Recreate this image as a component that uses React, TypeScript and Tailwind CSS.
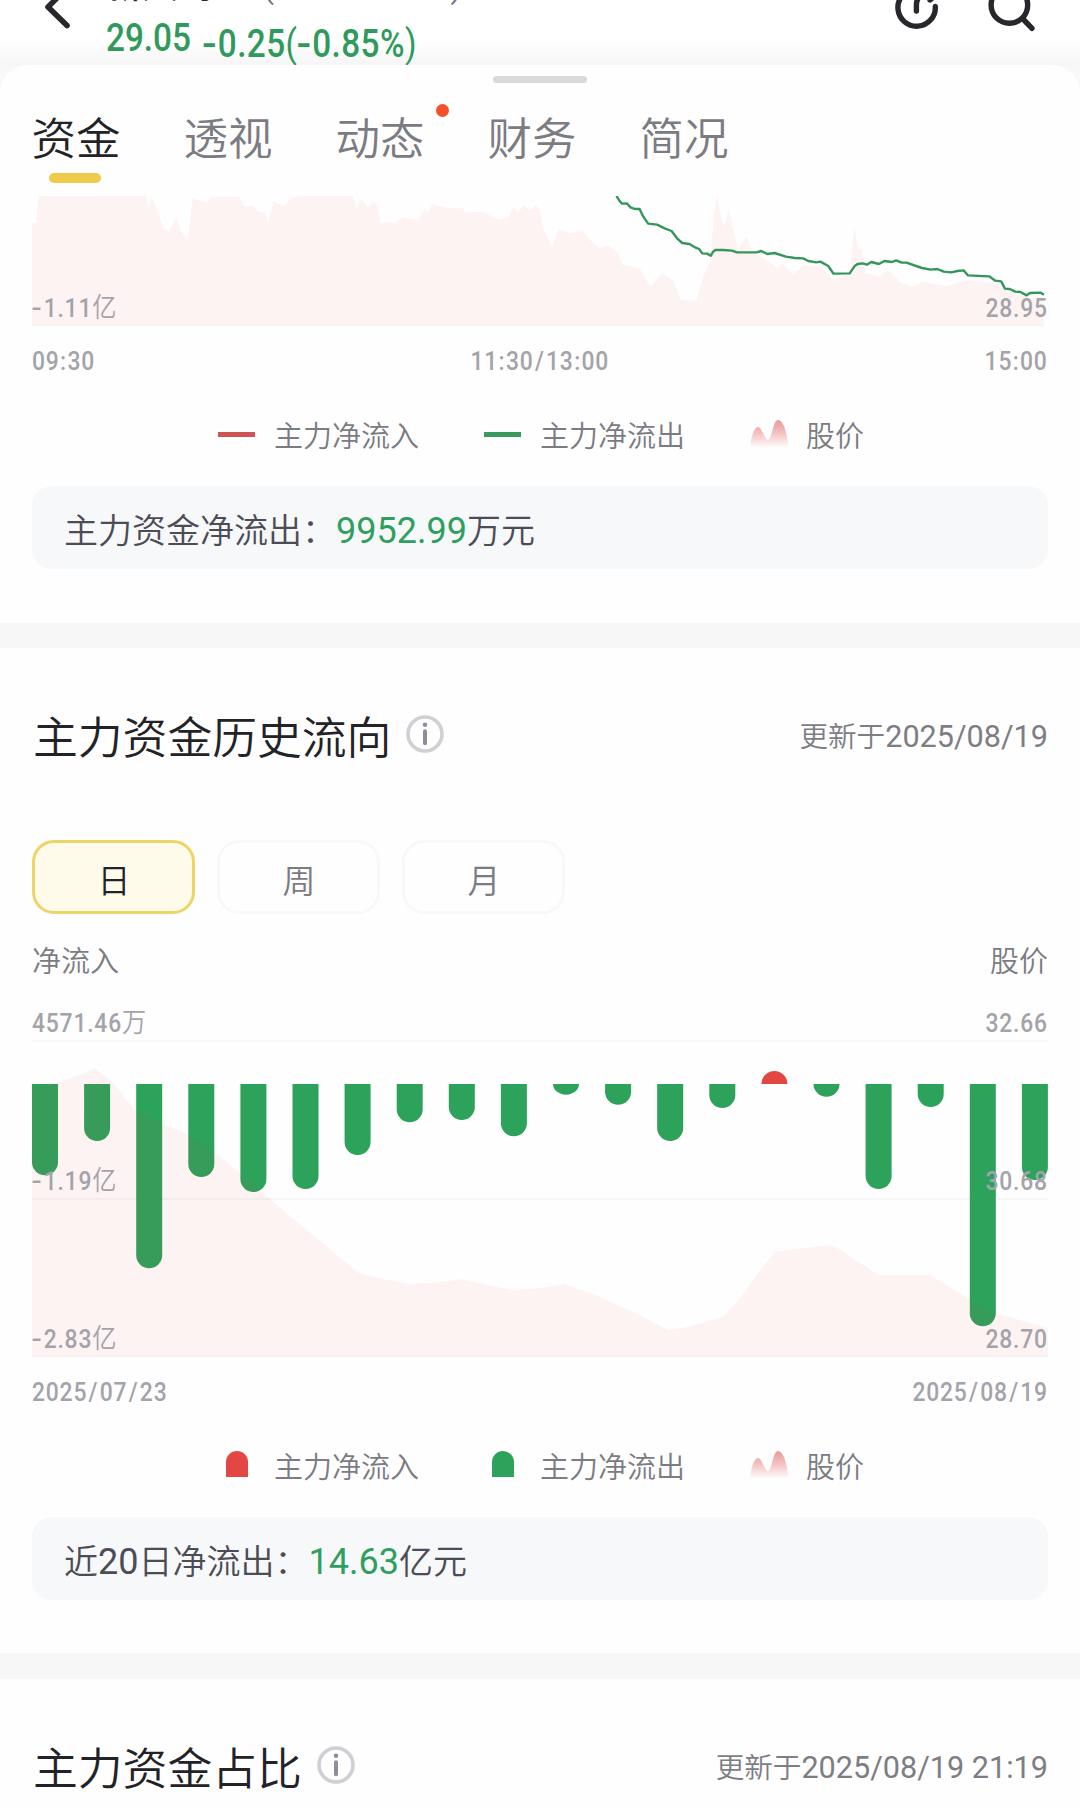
import React from "react";

const BARS = [91.3, 57, 184.3, 93, 108, 105, 71, 38.3, 36, 52.3, 10.7, 20.7, 57, 24, -13, 12.7, 105, 23, 242.3, 96];

const INTRADAY_AREA =
  "93,437 93,130 105,130 112,48 425,48 432,85 440,50 455,85 475,145 490,155 512,112 525,150 545,180 560,55 600,70 615,50 695,50 710,80 735,78 750,95 770,97 778,125 795,65 825,78 845,55 870,48 1025,48 1035,85 1050,58 1070,85 1082,65 1095,75 1105,130 1130,125 1145,130 1170,112 1215,120 1235,85 1240,100 1255,72 1300,85 1345,85 1350,95 1405,97 1450,120 1480,108 1490,80 1505,98 1520,75 1540,90 1555,75 1568,90 1578,150 1603,200 1623,148 1653,160 1693,153 1718,185 1743,205 1763,195 1793,215 1808,255 1858,265 1888,320 1923,280 1953,300 1978,360 2023,362 2038,300 2063,240 2073,100 2083,48 2093,110 2103,140 2116,90 2128,140 2143,210 2168,170 2183,210 2258,265 2273,250 2303,285 2333,255 2388,260 2418,300 2468,280 2480,140 2493,210 2503,205 2513,280 2553,290 2578,270 2618,310 2648,320 2678,305 2748,318 2808,300 2888,310 2948,340 3031,360 3031,437";

const OUTFLOW_LINE =
  "1790,48 1797,60 1806,71 1820,70 1831,82 1843,87 1857,87 1868,110 1882,131 1908,134 1930,145 1950,153 1966,175 1981,189 2002,192 2020,203 2030,207 2039,220 2053,221 2064,227 2070,216 2077,210 2100,210 2125,212 2140,217 2197,217 2210,213 2228,222 2249,219 2282,230 2308,234 2332,235 2347,243 2370,247 2382,245 2405,258 2420,281 2467,280 2481,259 2490,252 2505,250 2517,254 2530,246 2552,252 2568,243 2590,246 2602,241 2618,248 2632,248 2677,264 2702,269 2722,267 2740,275 2762,277 2780,273 2798,271 2810,286 2872,289 2890,302 2907,304 2918,326 2932,327 2948,335 2963,336 2981,346 2991,339 3022,338 3031,344";

const PRICE_AREA =
  "93,1280 93,475 168,457 225,438 275,415 330,460 395,545 470,582 530,605 640,680 735,765 850,865 1040,1028 1100,1045 1190,1062 1260,1058 1340,1048 1420,1066 1490,1080 1568,1075 1640,1062 1740,1100 1850,1152 1940,1200 2000,1190 2100,1160 2145,1110 2200,1030 2250,965 2330,955 2400,945 2430,953 2550,1035 2700,1035 2810,1105 2870,1145 2920,1158 3043,1195 3043,1280";

const GLYPH_STYLE: Record<string, string> = {
  "-": "inline-block scale-x-[1.3] ml-[1px] mr-[2.5px]",
  "/": "mx-[1.6px]",
  ":": "mx-[0.6px]",
  "亿": "text-[27.5px] font-[350]",
  "万": "text-[27.5px] font-[350]",
};

function spaced(text: string) {
  return text.split(/([-/:亿万])/).map((part, i) =>
    GLYPH_STYLE[part] ? (
      <span key={i} className={GLYPH_STYLE[part]}>
        {part}
      </span>
    ) : (
      part
    ),
  );
}

function Num({ children, className = "" }: { children: string; className?: string }) {
  return (
    <span className={`inline-block h-[30px] scale-x-[0.88] whitespace-nowrap text-[26px] font-medium leading-[30px] tracking-[0.9px] text-[#a3a3a9] ${className}`}>
      {spaced(children)}
    </span>
  );
}

function InfoIcon() {
  return (
    <svg width="38" height="38" viewBox="0 0 38 38" fill="none">
      <circle cx="19" cy="19" r="17" stroke="#cfcfd4" strokeWidth="3.6" />
      <circle cx="19" cy="9.8" r="2.3" fill="#8e8e99" />
      <path d="M19 16.2V28.2" stroke="#8e8e99" strokeWidth="4" strokeLinecap="round" />
    </svg>
  );
}

function PriceIcon({ id }: { id: string }) {
  return (
    <svg width="39" height="28" viewBox="0 0 39 28">
      <defs>
        <linearGradient id={id} x1="0" y1="0" x2="0" y2="1">
          <stop offset="0" stopColor="#e99a9a" />
          <stop offset="0.45" stopColor="#f3bfbf" />
          <stop offset="1" stopColor="#ffffff" />
        </linearGradient>
      </defs>
      <path
        d="M0 28C1 17 4 7 8 7C12 7 14 19 18 20C22 19 23 0 28 0C34 0 37 14 39 28Z"
        fill={`url(#${id})`}
      />
    </svg>
  );
}

function Legend({ kind }: { kind: "line" | "bar" }) {
  const mark = (line: string, bar: string) => (
    <span className="flex w-[37px] items-center justify-center">
      {kind === "line" ? <span className={line} /> : <span className={bar} />}
    </span>
  );
  return (
    <div className="flex h-8 items-center gap-[65px] pl-[218px] text-[29px] leading-8 text-[#7b7b82]">
      <div className="flex items-center gap-[19px]">
        {mark("h-[5px] w-[37px] bg-[#cf5352]", "h-[26px] w-[22px] rounded-t-full bg-[#e24743] -mt-[2px]")}
        <span className="pt-[5px]">主力净流入</span>
      </div>
      <div className="flex items-center gap-[19px]">
        {mark("h-[5px] w-[37px] bg-[#3a9a5d]", "h-[26px] w-[22px] rounded-t-full bg-[#2ca25b] -mt-[2px]")}
        <span className="pt-[5px]">主力净流出</span>
      </div>
      <div className="flex items-center gap-[17px]">
        <PriceIcon id={`price-${kind}`} />
        <span className="pt-[5px]">股价</span>
      </div>
    </div>
  );
}

function Summary({ label, value, unit }: { label: React.ReactNode; value: string; unit: string }) {
  return (
    <div className="mx-8 flex h-[83px] items-center rounded-[20px] bg-[#f7f8fa] pl-[32px] pt-[6px] text-[34px] text-[#4c4c56]">
      <span className="flex items-baseline whitespace-pre leading-[50px]">
        {label}
        <span className="text-[36px] font-normal text-[#2f9f5d]">{value}</span>
        {unit}
      </span>
    </div>
  );
}

function SectionHead({ title, date }: { title: string; date: string }) {
  return (
    <div className="flex h-[60px] items-center justify-between pl-[33px] pr-8">
      <div className="flex items-center gap-[15px]">
        <h2 className="pt-[8px] text-[44.8px] leading-[60px] text-[#232327]">{title}</h2>
        <span className="-mt-[2px]">
          <InfoIcon />
        </span>
      </div>
      <div className="pt-[4px] text-[28.6px] leading-[60px] text-[#7d7d84]">
        更新于<span className="text-[30.6px] font-normal">{date}</span>
      </div>
    </div>
  );
}

function Header() {
  return (
    <header className="relative flex h-[65px] overflow-hidden bg-gradient-to-b from-white from-60% to-[#f6f6f7]">
      <svg className="ml-10 shrink-0" width="66" height="40" viewBox="40 0 66 40" fill="none" stroke="#28272c" strokeWidth="5.6" strokeLinecap="round" strokeLinejoin="round">
        <path d="M67 -12L48 7L67 25.500" />
      </svg>
      <div className="flex w-[600px] flex-col">
        <div className="-mt-[35px] h-[42px] whitespace-nowrap text-[36px] font-medium leading-[42px] text-[#28272c]">
          新天药业 <span className="ml-[4px] text-[32px] font-normal tracking-[2.2px] text-[#77777f]">(SZ.002873)</span>
        </div>
        <div className="flex text-[38.5px] font-medium leading-[40px] text-[#2f9a5b]">
          <span className="mt-[11px] w-[97px]">
            <span className="inline-block origin-left scale-x-[0.865]">29.05</span>
          </span>
          <span className="mt-[17px] inline-block origin-left scale-x-[0.865] whitespace-nowrap tracking-[0.5px]">
            {spaced("-0.25")}
            <span className="font-normal">(</span>
            {spaced("-0.85")}%<span className="font-normal">)</span>
          </span>
        </div>
      </div>
      <svg className="ml-auto mr-8 shrink-0" width="160" height="40" viewBox="888 0 160 40" fill="none" stroke="#28272c" strokeWidth="5.4" strokeLinecap="round">
        <path d="M935.300 6.500A18.700 18.700 0 1 1 914 -11" />
        <path d="M916.400 11V5C916.400 -2 920 -6 930 -6M930 0L937 -6" />
        <circle cx="1009.400" cy="5" r="18.300" />
        <path d="M1023.500 19.500L1032 28.300" />
      </svg>
    </header>
  );
}

function Tabs() {
  const tabs = ["资金", "透视", "动态", "财务", "简况"];
  return (
    <nav className="flex gap-[63px] pl-[31.5px]">
      {tabs.map((t, i) => (
        <div key={t} className="relative flex w-[89px] flex-col items-center">
          <span className={`whitespace-nowrap text-[44.5px] leading-[60px] ${i === 0 ? "text-[#232327]" : "text-[#7b7b82]"}`}>{t}</span>
          {i === 0 && <span className="mr-[3px] mt-[3px] h-[10px] w-[52px] rounded-full bg-[#f0ca4b]" />}
          {i === 2 && <span className="absolute -right-[24px] -top-[6px] size-[13px] rounded-full bg-[#f4512a]" />}
        </div>
      ))}
    </nav>
  );
}

function Bars() {
  return (
    <svg className="absolute left-0 top-0" width="1016" height="317" viewBox="0 0 1016 317">
      {BARS.map((h, i) => {
        const x = i * 52.1;
        const a = Math.abs(h);
        const r = Math.min(13, a);
        const s = h > 0 ? 1 : -1;
        return (
          <path
            key={i}
            fill={h > 0 ? "#2ca25b" : "#e24743"}
            d={`M${x} 44V${44 + s * (a - r)}A13 ${r} 0 0 ${h > 0 ? 0 : 1} ${x + 26} ${44 + s * (a - r)}V44Z`}
          />
        );
      })}
    </svg>
  );
}

export default function App() {
  return (
    <div className="h-[1807px] w-[1080px] overflow-hidden bg-[#f8f8f9] font-['Roboto','Noto_Sans_CJK_SC',sans-serif] font-[350]">
      <Header />
      <main className="h-[1742px] rounded-t-[28px] bg-[#fefefe]">
        <div className="flex h-[131px] flex-col">
          <span className="mx-auto mt-[11px] h-[7px] w-[94px] shrink-0 rounded-full bg-[#d9d9db]" />
          <div className="mt-[27px]">
            <Tabs />
          </div>
        </div>

        <section className="h-[427px]">
          <div className="relative mx-8 h-[130px]">
            <svg className="block" width="1016" height="130" viewBox="93 48 2950 390" preserveAspectRatio="none">
              <polygon points={INTRADAY_AREA} fill="#e63c3c" fillOpacity="0.06" />
              <path d="M93 437H3031" stroke="#f3f1f2" strokeWidth="2" vectorEffect="non-scaling-stroke" />
              <polyline points={OUTFLOW_LINE} fill="none" stroke="#35965b" strokeWidth="2.4" strokeLinejoin="round" vectorEffect="non-scaling-stroke" />
            </svg>
            <Num className="absolute left-0 top-[97px] origin-left">-1.11亿</Num>
            <Num className="absolute right-0 top-[97px] origin-right">28.95</Num>
          </div>
          <div className="mx-8 mt-[20px] flex h-[30px] justify-between">
            <Num className="origin-left">09:30</Num>
            <Num className="origin-center">11:30/13:00</Num>
            <Num className="origin-right">15:00</Num>
          </div>
          <div className="mt-[42px]">
            <Legend kind="line" />
          </div>
          <div className="mt-[36px]">
            <Summary label="主力资金净流出：" value="9952.99" unit="万元" />
          </div>
        </section>

        <div className="h-[25px] bg-[#f7f7f8]" />

        <section className="h-[1005px] pt-[57px]">
          <SectionHead title="主力资金历史流向" date="2025/08/19" />
          <div className="ml-8 mt-[75px] flex gap-[22px] text-[33px] leading-none">
            <button className="flex h-[74px] w-[163px] items-center justify-center rounded-[22px] border-[3px] border-[#ecd566] bg-[#fffbeb] pl-[1px] pt-[8px] text-[#232327]">日</button>
            <button className="flex h-[74px] w-[163px] items-center justify-center rounded-[22px] border-[3px] border-[#f8f8f9] pl-[1px] pt-[8px] text-[#7b7b82]">周</button>
            <button className="flex h-[74px] w-[163px] items-center justify-center rounded-[22px] border-[3px] border-[#f8f8f9] pl-[1px] pt-[8px] text-[#7b7b82]">月</button>
          </div>
          <div className="mx-8 mt-[32px] flex h-8 justify-between text-[29px] leading-8 text-[#7b7b82]">
            <span>净流入</span>
            <span>股价</span>
          </div>
          <div className="mx-8 mt-[30px] flex h-[32px] justify-between">
            <Num className="origin-left">4571.46万</Num>
            <Num className="origin-right">32.66</Num>
          </div>
          <div className="relative mx-8 h-[317px]">
            <div className="absolute inset-x-0 top-0 h-[2px] bg-[#f8f8f9]" />
            <div className="absolute inset-x-0 top-[158px] h-[2px] bg-[#f7f6f7]" />
            <Bars />
            <svg className="absolute left-0 top-0" width="1016" height="317" viewBox="93 330 2950 951" preserveAspectRatio="none">
              <polygon points={PRICE_AREA} fill="#e63c3c" fillOpacity="0.06" />
              <path d="M93 1279H3043" stroke="#f7eeee" strokeWidth="2" vectorEffect="non-scaling-stroke" />
            </svg>
            <Num className="absolute left-0 top-[126px] origin-left">-1.19亿</Num>
            <Num className="absolute right-0 top-[126px] origin-right">30.68</Num>
            <Num className="absolute left-0 top-[284px] origin-left">-2.83亿</Num>
            <Num className="absolute right-0 top-[284px] origin-right">28.70</Num>
          </div>
          <div className="mx-8 mt-[20px] flex h-[30px] justify-between">
            <Num className="origin-left">2025/07/23</Num>
            <Num className="origin-right">2025/08/19</Num>
          </div>
          <div className="mt-[42px]">
            <Legend kind="bar" />
          </div>
          <div className="mt-[36px]">
            <Summary label={<>近<span className="text-[36px] font-normal">20</span>日净流出：</>} value="14.63" unit="亿元" />
          </div>
        </section>

        <div className="h-[26px] bg-[#f7f7f8]" />

        <section className="pt-[57px]">
          <SectionHead title="主力资金占比" date="2025/08/19 21:19" />
        </section>
      </main>
    </div>
  );
}
